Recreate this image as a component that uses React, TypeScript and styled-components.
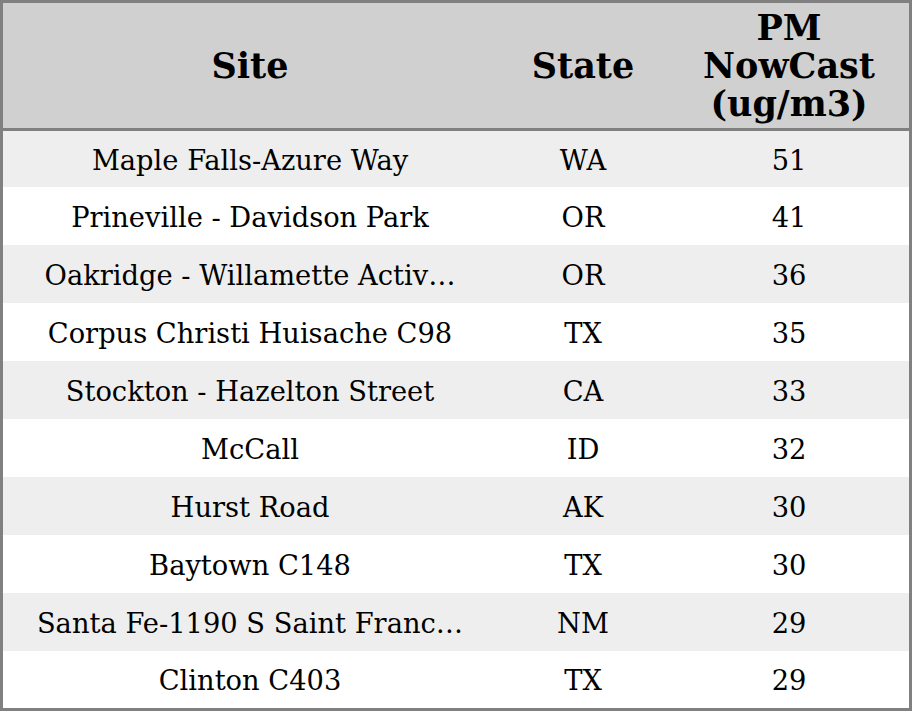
import React from "react";
import styled, { createGlobalStyle } from "styled-components";

type Row = { site: string; state: string; pm: number };

const rows: Row[] = [
  { site: "Maple Falls-Azure Way", state: "WA", pm: 51 },
  { site: "Prineville - Davidson Park", state: "OR", pm: 41 },
  { site: "Oakridge - Willamette Activ…", state: "OR", pm: 36 },
  { site: "Corpus Christi Huisache C98", state: "TX", pm: 35 },
  { site: "Stockton - Hazelton Street", state: "CA", pm: 33 },
  { site: "McCall", state: "ID", pm: 32 },
  { site: "Hurst Road", state: "AK", pm: 30 },
  { site: "Baytown C148", state: "TX", pm: 30 },
  { site: "Santa Fe-1190 S Saint Franc…", state: "NM", pm: 29 },
  { site: "Clinton C403", state: "TX", pm: 29 },
];

const App = () => {
  return (
    <>
      <GlobalStyle />
      <StyledTable>
        <StyledHeader>
          <StyledHeadCell>Site</StyledHeadCell>
          <StyledHeadCell>State</StyledHeadCell>
          <StyledHeadCell>
            PM
            <br />
            NowCast
            <br />
            (ug/m3)
          </StyledHeadCell>
        </StyledHeader>
        {rows.map((r, i) => (
          <StyledRow key={i} $shaded={i % 2 === 0}>
            <StyledCell>{r.site}</StyledCell>
            <StyledCell>{r.state}</StyledCell>
            <StyledCell>{r.pm}</StyledCell>
          </StyledRow>
        ))}
      </StyledTable>
    </>
  );
};

const GlobalStyle = createGlobalStyle`
  html, body {
    margin: 0;
    padding: 0;
    background: white;
  }
  body {
    font-family: "DejaVu Serif", serif;
    color: black;
  }
`;

const StyledTable = styled.div`
  box-sizing: border-box;
  width: 912px;
  height: 711px;
  border: 3px solid #808080;
  display: grid;
  grid-template-rows: 128px 56px repeat(8, 58px) 1fr;
`;

const StyledHeader = styled.div`
  display: grid;
  grid-template-columns: 494px 172px 1fr;
  background-color: #d0d0d0;
  border-bottom: 3px solid #808080;
`;

const StyledHeadCell = styled.div`
  display: flex;
  align-items: center;
  justify-content: center;
  text-align: center;
  font-size: 35px;
  font-weight: bold;
  line-height: 38px;
`;

const StyledRow = styled.div<{ $shaded: boolean }>`
  display: grid;
  grid-template-columns: 494px 172px 1fr;
  background-color: ${(p) => (p.$shaded ? "#eeeeee" : "white")};
`;

const StyledCell = styled.div`
  display: flex;
  align-items: center;
  justify-content: center;
  padding-top: 2px;
  font-size: 27.3px;
  white-space: nowrap;
`;

export default App;
